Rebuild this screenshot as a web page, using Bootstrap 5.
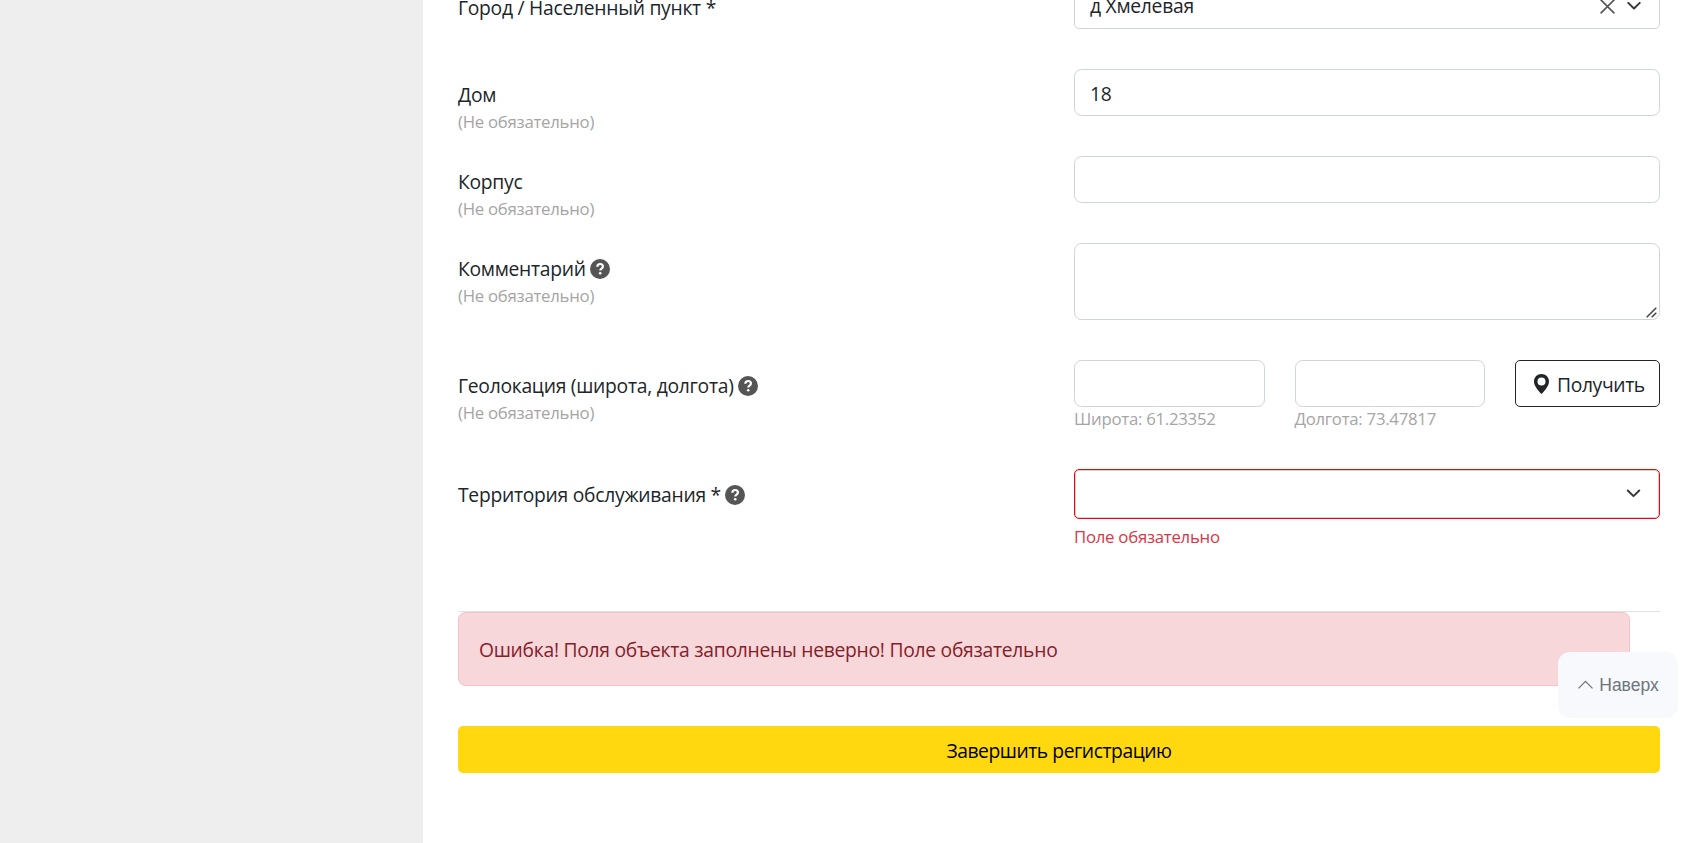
<!DOCTYPE html>
<html lang="ru">
<head>
<meta charset="utf-8">
<meta name="viewport" content="width=device-width, initial-scale=1">
<title>Регистрация объекта</title>
<link href="https://cdn.jsdelivr.net/npm/bootstrap@5.3.0/dist/css/bootstrap.min.css" rel="stylesheet">
<style>
html{font-size:20px}
body{font-family:"Segoe UI","Open Sans","Noto Sans",sans-serif;font-size:19.3px;color:#212529;overflow:hidden;height:100vh;letter-spacing:-.27px}
.side-pane{background:#eee}
.page-main{min-width:0;padding:0 30px 0 35.5px;margin-top:-18px}
.field-label{padding-top:10.5px;line-height:30px;margin-bottom:-1px;white-space:nowrap}
.field-note,.field-error{font-size:16.8px;line-height:26.25px;white-space:nowrap}
.field-note{color:#a5a5a5}
.coord-note{margin-top:-1px}
.form-row{min-height:87px}
.form-row.tall{min-height:117px}
.form-row.geo{min-height:109px}
.form-row.last{min-height:142px}
.form-control,.pick-box{border:1px solid #ced4da;letter-spacing:inherit;color:#212529}
.form-control{border-radius:7.5px;height:47px;font-size:19.3px;padding:8px 15px 7px}
textarea.form-control{height:77px;resize:none}
.resize-grip{right:3px;bottom:2px}
.pick-box{height:47px;border-radius:5px;padding:2px 15px 0}
.pick-box.invalid{height:50px;border-color:#f00;box-shadow:inset 0 0 0 1px #ced4da;padding-top:0}
.pick-clear{margin-right:9px}
.help-dot{width:20px;height:20px;margin-left:4.5px;vertical-align:-3px}
.btn{border-radius:5px;height:47px;font-size:19.3px;padding-top:9px;padding-bottom:6px}
.btn-locate{border-color:#212529;width:145px;padding:0 0 0 18px;white-space:nowrap;letter-spacing:-.36px}
.btn-locate svg{margin-right:8px}
.btn-locate span{padding-top:3px}
.coord-row{gap:30px}
.btn-finish,.btn-finish:hover{background:#ffd80f;color:#000;letter-spacing:-.46px}
.field-error{margin-top:5px;color:#dc3545}
.alert-box{width:1172px;height:74px;padding:22px 20px 20px;line-height:30px;background:#f8d7da;border-color:#f5c2c7;color:#842029;border-radius:7.5px;margin-bottom:40px}
.to-top{right:12px;top:652px;width:120px;height:66px;padding-left:1px;border-radius:12px;background:#f8f9fc;color:#6c757d;font:17.5px "Liberation Sans",Arial,sans-serif;letter-spacing:0}
.to-top svg{margin-right:6px;margin-bottom:1px}
</style>
</head>
<body>
<div class="d-flex vh-100">
  <aside class="side-pane col-3 flex-shrink-0"></aside>
  <main class="page-main flex-grow-1">
    <form>
      <div class="row form-row">
        <div class="col-6"><div class="field-label">Город / Населенный пункт *</div></div>
        <div class="col-6">
          <div class="pick-box d-flex align-items-center">
            <span class="me-auto">д Хмелевая</span>
            <svg class="pick-clear" width="15" height="15" viewBox="0 0 15 15" fill="none" stroke="#555" stroke-width="1.6"><path d="M.6.6l13.8 13.8M14.4.6L.6 14.4"/></svg>
            <svg width="20" height="20" viewBox="0 0 16 16" fill="none" stroke="#343a40" stroke-width="1.6" stroke-linecap="round" stroke-linejoin="round"><path d="M3.4 4.700L8 9.200l4.6-4.5"/></svg>
          </div>
        </div>
      </div>
      <div class="row form-row">
        <div class="col-6"><div class="field-label">Дом</div><div class="field-note">(Не обязательно)</div></div>
        <div class="col-6"><input class="form-control" value="18"></div>
      </div>
      <div class="row form-row">
        <div class="col-6"><div class="field-label">Корпус</div><div class="field-note">(Не обязательно)</div></div>
        <div class="col-6"><input class="form-control"></div>
      </div>
      <div class="row form-row tall">
        <div class="col-6">
          <div class="field-label">Комментарий<svg class="help-dot" viewBox="0 0 20 20"><circle cx="10" cy="10" r="10" fill="#555"/><path d="M7.3 7.7C7.4 6 8.4 5 10.1 5s2.8 1 2.8 2.4c0 1.1-.6 1.7-1.4 2.3-.9.6-1.2 1-1.2 1.9" fill="none" stroke="#fff" stroke-width="2.2"/><circle cx="10.2" cy="14.2" r="1.3" fill="#fff"/></svg></div>
          <div class="field-note">(Не обязательно)</div>
        </div>
        <div class="col-6">
          <div class="position-relative">
            <textarea class="form-control"></textarea>
            <svg class="resize-grip position-absolute" width="11" height="11" viewBox="0 0 11 11" fill="none" stroke="#444" stroke-width="1.5"><path d="M.7 10.300L10.300.7M5.700 10.300l4.600-4.600"/></svg>
          </div>
        </div>
      </div>
      <div class="row form-row geo">
        <div class="col-6">
          <div class="field-label">Геолокация (широта, долгота)<svg class="help-dot" viewBox="0 0 20 20"><circle cx="10" cy="10" r="10" fill="#555"/><path d="M7.3 7.7C7.4 6 8.4 5 10.1 5s2.8 1 2.8 2.4c0 1.1-.6 1.7-1.4 2.3-.9.6-1.2 1-1.2 1.9" fill="none" stroke="#fff" stroke-width="2.2"/><circle cx="10.2" cy="14.2" r="1.3" fill="#fff"/></svg></div>
          <div class="field-note">(Не обязательно)</div>
        </div>
        <div class="col-6">
          <div class="coord-row d-flex align-items-start">
            <div class="flex-fill"><input class="form-control"><div class="field-note coord-note">Широта: 61.23352</div></div>
            <div class="flex-fill"><input class="form-control"><div class="field-note coord-note">Долгота: 73.47817</div></div>
            <button type="button" class="btn btn-locate flex-shrink-0 d-flex align-items-center"><svg width="15" height="20" viewBox="0 0 15 20"><path fill="#212529" fill-rule="evenodd" d="M7.5 0C3.3 0 0 3.2 0 7.4c0 4.1 3.2 8 7.5 12.6C11.8 15.4 15 11.5 15 7.4 15 3.200 11.700 0 7.500 0zm0 3.600a4 4 0 1 1 0 8 4 4 0 0 1 0-8z"/></svg><span>Получить</span></button>
          </div>
        </div>
      </div>
      <div class="row form-row last">
        <div class="col-6">
          <div class="field-label">Территория обслуживания *<svg class="help-dot" viewBox="0 0 20 20"><circle cx="10" cy="10" r="10" fill="#555"/><path d="M7.3 7.7C7.4 6 8.4 5 10.1 5s2.8 1 2.8 2.4c0 1.1-.6 1.7-1.4 2.3-.9.6-1.2 1-1.2 1.9" fill="none" stroke="#fff" stroke-width="2.2"/><circle cx="10.2" cy="14.2" r="1.3" fill="#fff"/></svg></div>
        </div>
        <div class="col-6">
          <div class="pick-box invalid d-flex align-items-center justify-content-end">
            <svg width="20" height="20" viewBox="0 0 16 16" fill="none" stroke="#343a40" stroke-width="1.6" stroke-linecap="round" stroke-linejoin="round"><path d="M3 5.200L7.600 9.700l4.600-4.500"/></svg>
          </div>
          <div class="field-error">Поле обязательно</div>
        </div>
      </div>
      <div class="border-top">
        <div class="alert alert-box" role="alert">Ошибка! Поля объекта заполнены неверно! Поле обязательно</div>
        <button type="button" class="btn btn-finish w-100">Завершить регистрацию</button>
      </div>
    </form>
  </main>
</div>
<a class="to-top position-fixed d-flex align-items-center justify-content-center text-decoration-none"><svg width="15" height="9" viewBox="0 0 15 9" fill="none" stroke="#6c757d" stroke-width="1.3"><path d="M.5 8.400l7-7 7 7"/></svg>Наверх</a>
<script src="https://cdn.jsdelivr.net/npm/bootstrap@5.3.0/dist/js/bootstrap.bundle.min.js"></script>
</body>
</html>
